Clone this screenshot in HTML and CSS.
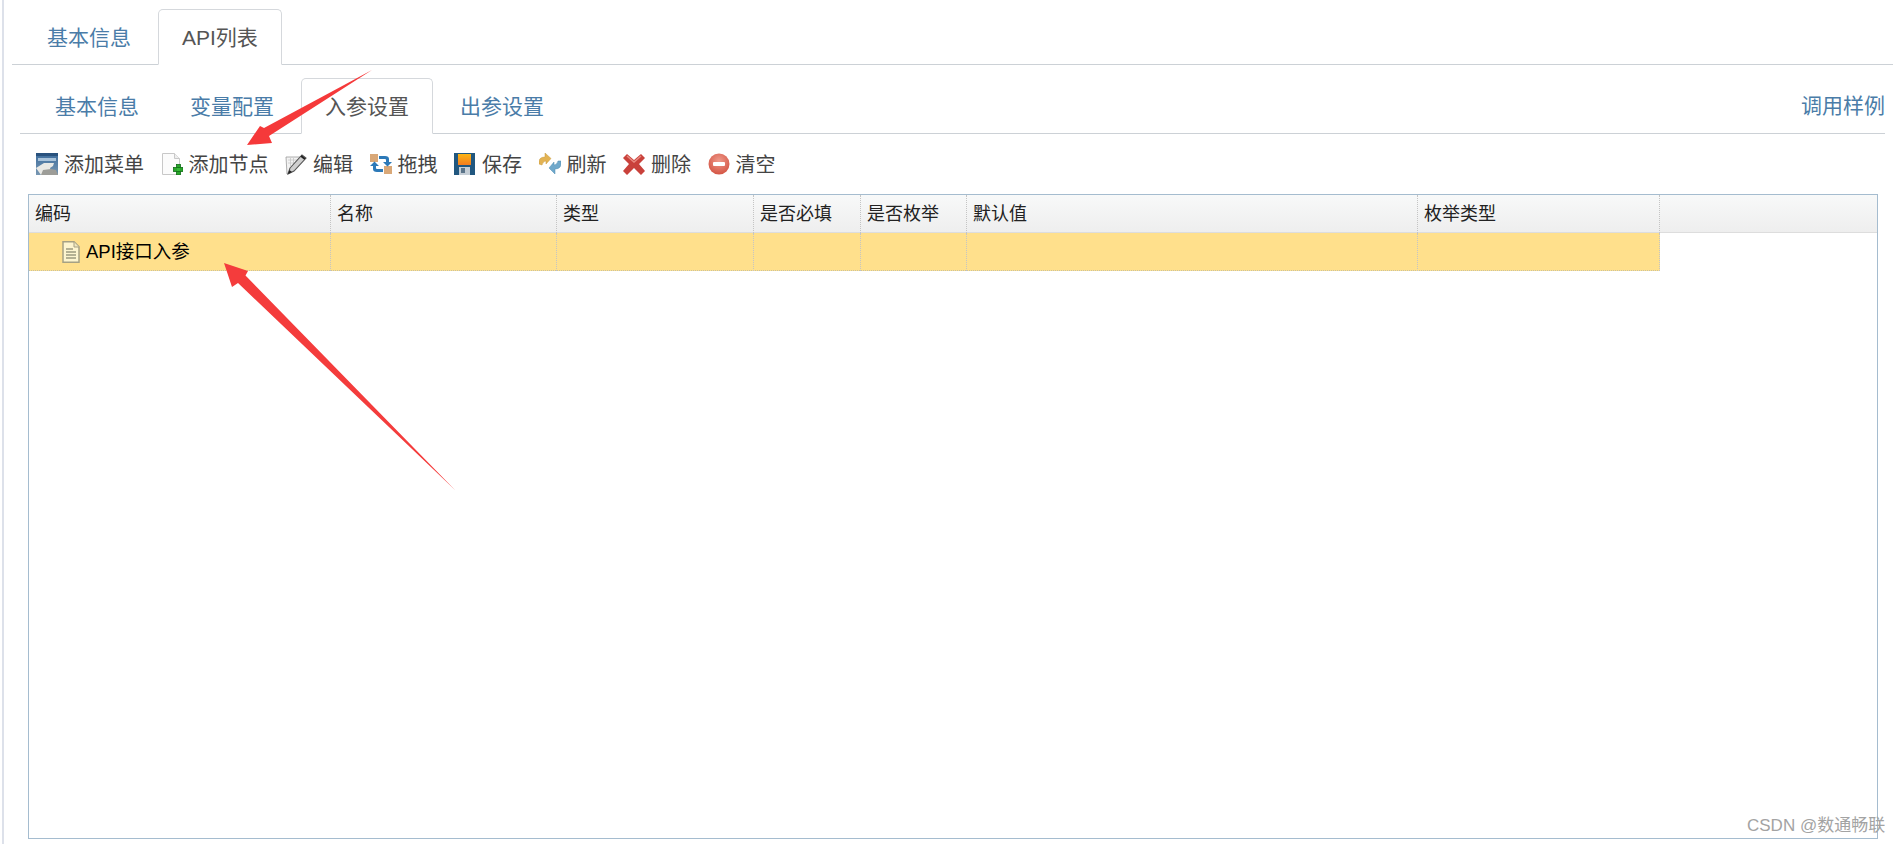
FILE: index.html
```html
<!DOCTYPE html>
<html lang="zh">
<head>
<meta charset="utf-8">
<title>API列表</title>
<link rel="stylesheet" href="styles.css">
</head>
<body>
<div class="page">
  <nav class="tabs tabs-main">
    <a class="tab">基本信息</a>
    <a class="tab active">API列表</a>
  </nav>
  <nav class="tabs tabs-sub">
    <a class="tab">基本信息</a>
    <a class="tab">变量配置</a>
    <a class="tab active">入参设置</a>
    <a class="tab">出参设置</a>
    <a class="tab-link">调用样例</a>
  </nav>
  <div class="toolbar">
    <span class="tool">
      <svg class="ico" viewBox="0 0 22 22"><defs><linearGradient id="g1" x1="0" y1="0" x2="0" y2="1"><stop offset="0" stop-color="#3a6b9c"/><stop offset="1" stop-color="#7f9cb5"/></linearGradient></defs><rect width="22" height="24" fill="url(#g1)"/><rect width="22" height="3" fill="#29527e"/><rect x="2" y="5" width="18" height="3" fill="#a9c3da"/><path d="M0 15l8-5h10l-1 3-3 2 2 7H5z" fill="#e9e9e5"/><path d="M5 22l2-5 8-1 5 1 2 5z" fill="#9d9d98"/></svg>
      <span>添加菜单</span>
    </span>
    <span class="tool">
      <svg class="ico" viewBox="0 0 22 22"><path d="M1.500.5h12l5 5v16h-17z" fill="#fbfbfb" stroke="#c8c8c8"/><path d="M13.500.5v5h5" fill="#eee" stroke="#c8c8c8"/><rect x="15.500" y="11.500" width="4" height="10.500" fill="#2aa52a" stroke="#0f6d17" stroke-width=".8"/><rect x="12.500" y="14.500" width="9.500" height="4" fill="#2aa52a" stroke="#0f6d17" stroke-width=".8"/><rect x="16" y="15" width="3" height="3" fill="#35b835"/></svg>
      <span>添加节点</span>
    </span>
    <span class="tool">
      <svg class="ico" viewBox="0 0 22 22"><path d="M1 4h14L6 16l-4 5z" fill="#f3f3f3" stroke="#9a9a9a" stroke-width=".8"/><path d="M3 7h9M3 10h6M5.500 5v8M8.500 5v6" stroke="#c6c6c6" stroke-width=".8"/><path d="M5 15L17 2l4 3L9 18l-6 3z" fill="#cfcfcf" stroke="#555" stroke-width="1.100"/><path d="M16 3l4 3" stroke="#222" stroke-width="2"/><path d="M3 21l1.500-4 2.500 2z" fill="#222"/></svg>
      <span>编辑</span>
    </span>
    <span class="tool">
      <svg class="ico" viewBox="0 0 22 22"><rect x="0" y="1" width="8" height="8" fill="#d9a878"/><rect x="14" y="13" width="8" height="8" fill="#d9a878"/><path d="M9 3h6q4 0 4 3v3h3l-4.500 4.500L13 9h3V7q0-1-1-1H9z" fill="#2c79b8"/><path d="M13 19H7q-4 0-4-3v-3H0l4.500-4.500L9 13H6v2q0 1 1 1h6z" fill="#2c79b8"/></svg>
      <span>拖拽</span>
    </span>
    <span class="tool">
      <svg class="ico" viewBox="0 0 22 22"><defs><linearGradient id="g5" x1="0" y1="0" x2="0" y2="1"><stop offset="0" stop-color="#fbb516"/><stop offset="1" stop-color="#f47c1e"/></linearGradient></defs><rect width="21" height="22" fill="#21577f"/><rect x="4" y="1" width="13" height="11" fill="url(#g5)"/><rect x="5" y="14" width="11" height="8" fill="#c5ced6"/><rect x="7" y="15" width="4" height="5" fill="#5b7489"/></svg>
      <span>保存</span>
    </span>
    <span class="tool">
      <svg class="ico" viewBox="0 0 22 22"><path d="M0 11Q-1 4 6 4V0l6 5.500L7 11V8q-3 0-4 4z" fill="#e3b353" stroke="#c79a3e" stroke-width=".5"/><path d="M22 8q1 8-6 8v5l-6-6 5-6v3q3 0 4-4z" fill="#6fa8cb" stroke="#4f8cb2" stroke-width=".5"/></svg>
      <span>刷新</span>
    </span>
    <span class="tool">
      <svg class="ico" viewBox="0 0 22 22"><path d="M4 1l7 6 7-6 4 4-6 6 6 7-4 4-7-7-7 7-4-4 6-7-6-6z" fill="#c9413b"/><path d="M4 3l7 6 7-6" stroke="#e98a80" stroke-width="1.500" fill="none"/></svg>
      <span>删除</span>
    </span>
    <span class="tool">
      <svg class="ico" viewBox="0 0 22 22"><defs><radialGradient id="g8" cx=".5" cy=".35" r=".7"><stop offset="0" stop-color="#ef9a8b"/><stop offset="1" stop-color="#d2503f"/></radialGradient></defs><circle cx="11" cy="11" r="10.500" fill="url(#g8)"/><rect x="5" y="9" width="12" height="4" rx="1" fill="#fff"/></svg>
      <span>清空</span>
    </span>
  </div>
  <div class="grid">
    <div class="row head">
      <div class="cell">编码</div>
      <div class="cell">名称</div>
      <div class="cell">类型</div>
      <div class="cell">是否必填</div>
      <div class="cell">是否枚举</div>
      <div class="cell">默认值</div>
      <div class="cell">枚举类型</div>
      <div class="cell last"></div>
    </div>
    <div class="row body">
      <div class="cell node">
        <svg class="doc" viewBox="0 0 18 22"><path d="M1 .8h11l5 5v15.400H1z" fill="#fdf5cf" stroke="#a6a184" stroke-width="1.500"/><path d="M12 1v5h5" fill="#efe7c0" stroke="#a6a184"/><path d="M4 8h7M4 11h10M4 14h10M4 17h10" stroke="#9c9a80" stroke-width="1.300"/></svg>
        <span>API接口入参</span>
      </div>
      <div class="cell"></div>
      <div class="cell"></div>
      <div class="cell"></div>
      <div class="cell"></div>
      <div class="cell"></div>
      <div class="cell"></div>
    </div>
  </div>
  <svg class="arrows" viewBox="0 0 1899 844">
    <polygon points="372,70 269,136 272,143 247,145 260,126 264,128" fill="#f5393a"/>
    <polygon points="455,490 238,283 232,287 224,263 248,271 245.500,275.500" fill="#f43c3c"/>
  </svg>
  <div class="mark">CSDN @数通畅联</div>
</div>
</body>
</html>
```
FILE: styles.css
```css
* { box-sizing: border-box; }
html, body { margin: 0; padding: 0; background: #fff; }
body { font-family: "Liberation Sans", "Noto Sans CJK SC", sans-serif; overflow: hidden; }
.page {
  position: relative;
  height: 844px;
  margin-left: 2px;
  width: 1897px;
  border-left: 2px solid #dde1ea;
  overflow: hidden;
}
.tabs {
  display: flex;
  align-items: flex-end;
  border-bottom: 1px solid #ccd1d6;
}
.tabs-main { margin: 0 6px 0 8px; padding: 8px 0 0 11px; height: 65px; }
.tabs-sub { margin: 12px 14px 0 16px; padding-left: 11px; height: 57px; }
.tab {
  display: flex;
  align-items: center;
  justify-content: center;
  height: 100%;
  margin-right: 3px;
  padding: 0 23px 2px;
  font-size: 21px;
  color: #4a7ca8;
  border: 1px solid transparent;
  border-radius: 5px 5px 0 0;
  margin-bottom: -1px;
}
.tab.active {
  color: #555;
  background: #fff;
  border-color: #d5d8dc #d5d8dc #fff;
}
.tab-link {
  margin-left: auto;
  align-self: center;
  padding-bottom: 2px;
  font-size: 21px;
  color: #4a7ca8;
}
.toolbar {
  display: flex;
  align-items: center;
  margin: 18px 0 0 32px;
  height: 23px;
  gap: 16.5px;
}
.tool {
  display: flex;
  align-items: center;
  gap: 6px;
  font-size: 20px;
  color: #444;
}
.ico { width: 22px; height: 22px; flex: none; }
.grid {
  margin: 19px 0 0 24px;
  width: 1850px;
  height: 645px;
  border: 1px solid #a5bccf;
}
.row {
  display: grid;
  grid-template-columns: 302px 226px 197px 107px 106px 451px 242px;
  height: 38px;
  font-size: 18px;
  line-height: 38px;
}
.head {
  grid-template-columns: 302px 226px 197px 107px 106px 451px 242px 1fr;
  background: linear-gradient(#f8f9f9, #eeeeee);
  border-bottom: 1px solid #dddddd;
  color: #222;
}
.body {
  background: #ffe08c;
  width: 1631px;
  border-bottom: 1px dotted #c9c2a0;
  color: #000;
}
.cell {
  padding-left: 6px;
  border-right: 1px dotted #c4c4c4;
  white-space: nowrap;
}
.cell.last { border-right: 0; }
.node {
  display: flex;
  align-items: center;
  gap: 6px;
  padding-left: 33px;
  font-size: 18.5px;
}
.doc { width: 18px; height: 22px; flex: none; }
.arrows {
  position: absolute;
  left: -4px;
  top: 0;
  width: 1899px;
  height: 844px;
  pointer-events: none;
}
.mark {
  position: absolute;
  left: 1743px;
  top: 816px;
  font-size: 17px;
  line-height: 20px;
  color: #a3a3a3;
  white-space: nowrap;
}
```
